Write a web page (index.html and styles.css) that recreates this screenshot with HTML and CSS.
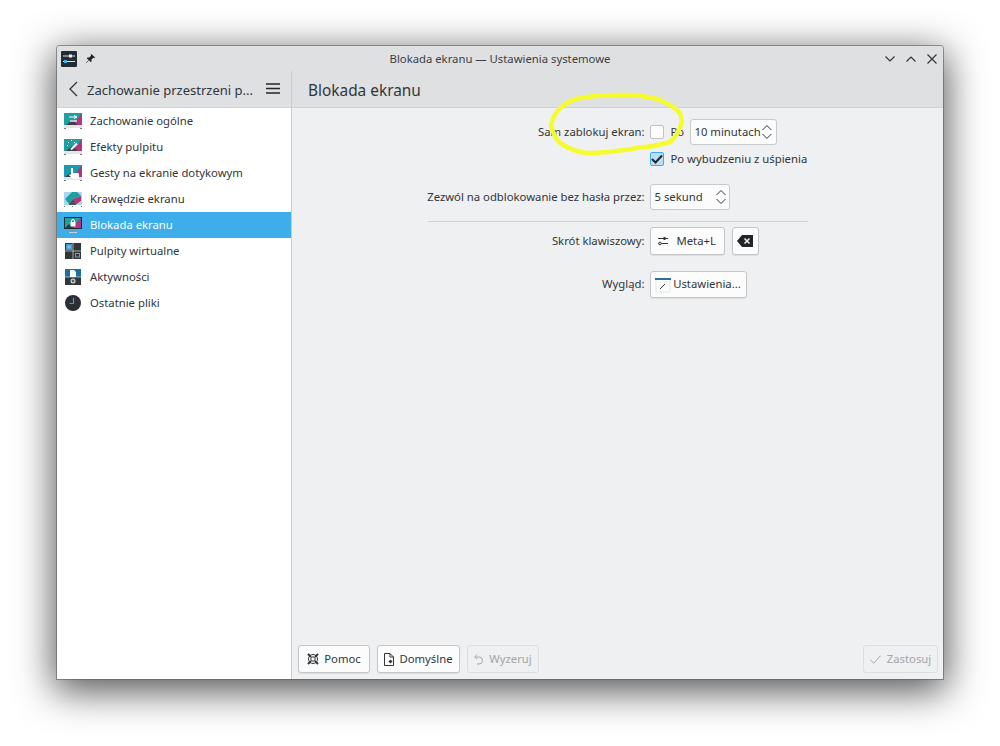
FILE: index.html
```html
<!DOCTYPE html>
<html lang="pl">
<head>
<meta charset="utf-8">
<title>Blokada ekranu — Ustawienia systemowe</title>
<link rel="stylesheet" href="styles.css">
</head>
<body>
<div class="window">
  <header class="titlebar">
    <svg class="app-icon" width="16" height="16" viewBox="0 0 16 16"><rect width="16" height="16" rx="1" fill="#232b33"/><path d="M2 5h12M2 10.500h12" stroke="#dfe5ea" stroke-width="1"/><rect x="8" y="3.500" width="3" height="3" fill="#eef2f5"/><rect x="3" y="9" width="3" height="3" fill="#3daee9"/></svg>
    <svg class="pin" width="11" height="11" viewBox="0 0 12 12"><path d="M7 1l4 4-1 .6-1-.3-2 2 .2 1.800-.9.900-2-2L1.500 11 1 10.500l2.900-2.800-2-2 .9-.9 1.800.2 2-2-.3-1z" fill="#232629"/></svg>
    <div class="title">Blokada ekranu — Ustawienia systemowe</div>
    <div class="controls">
      <svg width="10" height="6" viewBox="0 0 10 6"><path d="M.5 .5l4.500 4.500 4.500-4.500" fill="none" stroke="#31363b" stroke-width="1.200"/></svg>
      <svg width="10" height="6" viewBox="0 0 10 6"><path d="M.5 5.500l4.500-4.500 4.500 4.500" fill="none" stroke="#31363b" stroke-width="1.200"/></svg>
      <svg width="10" height="10" viewBox="0 0 10 10"><path d="M.5 .5l9 9M9.500 .5l-9 9" fill="none" stroke="#31363b" stroke-width="1.200"/></svg>
    </div>
  </header>
  <div class="body">
    <aside class="side">
      <div class="side-head">
        <svg class="back" width="10" height="16" viewBox="0 0 10 16"><path d="M9 1L2 8l7 7" fill="none" stroke="#31363b" stroke-width="1.300"/></svg>
        <span class="side-title">Zachowanie przestrzeni p...</span>
        <svg class="burger" width="14" height="12" viewBox="0 0 14 12"><path d="M0 1h14M0 5.500h14M0 10h14" stroke="#232629" stroke-width="1.500"/></svg>
      </div>
      <nav class="list">
        <a class="item">
          <svg width="18" height="16" viewBox="0 0 18 16"><path d="M0 0h18v12H0z" fill="#1f9f9f"/><path d="M18 0v12H9z" fill="#b0357f"/><path d="M2 12l6-5 6 5z" fill="#3d4449"/><path d="M0 12h18v3H0z" fill="#e3e5e7"/><path d="M0 15h2v1H0zM16 15h2v1h-2z" fill="#70767a"/><path d="M5 4h8M10 2.500L13 4l-3 1.500" fill="none" stroke="#fff"/><path d="M6 8h7" stroke="#e8dfe6" stroke-width="1.500"/></svg>
          <span>Zachowanie ogólne</span>
        </a>
        <a class="item">
          <svg width="18" height="16" viewBox="0 0 18 16"><path d="M0 0h18v12H0z" fill="#1f9f9f"/><path d="M18 0v12H9z" fill="#b0357f"/><path d="M2 12l6-5 6 5z" fill="#3d4449"/><path d="M0 12h18v3H0z" fill="#e3e5e7"/><path d="M0 15h2v1H0zM16 15h2v1h-2z" fill="#70767a"/><path d="M7 10.500l6-6" stroke="#fff" stroke-width="2"/><path d="M4 3h1v1H4zM7 1h1v1H7zM3 6h1v1H3zM10 3h1v1h-1z" fill="#fff"/></svg>
          <span>Efekty pulpitu</span>
        </a>
        <a class="item">
          <svg width="18" height="16" viewBox="0 0 18 16"><path d="M0 0h18v12H0z" fill="#1c9ab0"/><path d="M18 0v12H9z" fill="#b0357f"/><path d="M1 12l5-4 5 4z" fill="#3d4449"/><path d="M0 12h18v3H0z" fill="#e3e5e7"/><path d="M0 15h2v1H0zM16 15h2v1h-2z" fill="#70767a"/><path d="M7 3h2v5h5l1 1v5H9L5 10l1-1 1 1z" fill="#fff"/></svg>
          <span>Gesty na ekranie dotykowym</span>
        </a>
        <a class="item">
          <svg width="18" height="16" viewBox="0 0 18 16"><path d="M0 1h18v13H0z" fill="#a8d8ee"/><path d="M1 8l7-7h5l4 4-8 3-4 5z" fill="#1f9f9f"/><path d="M9 8l8-3v5l-6 4z" fill="#b0357f"/><path d="M5 13l4-5 3 6H5z" fill="#4a5156"/><path d="M0 15h1v1H0zM8 15h1v1H8zM17 15h1v1h-1z" fill="#70767a"/></svg>
          <span>Krawędzie ekranu</span>
        </a>
        <a class="item active">
          <svg width="18" height="16" viewBox="0 0 18 16"><path d="M0 0h18v12H0z" fill="#232b33"/><path d="M1 1h16v10H1z" fill="#1f9f9f"/><path d="M17 1v10H7z" fill="#b0357f"/><path d="M1 11l4-4 5 4z" fill="#31363b"/><path d="M5 15h8v1H5z" fill="#c8ced2"/><path d="M8 12h2v3H8z" fill="#8a9297"/><rect x="6.500" y="5" width="5" height="4.500" fill="#fff"/><path d="M7.500 5V4a1.500 1.500 0 0 1 3 0v1" fill="none" stroke="#fff"/></svg>
          <span>Blokada ekranu</span>
        </a>
        <a class="item">
          <svg width="18" height="16" viewBox="0 0 18 16"><path d="M1 0h16v16H1z" fill="#31363b"/><path d="M9 0v16M1 8h16" stroke="#eff0f1" stroke-width=".6"/><path d="M2 1h6v6H2z" fill="#3a9bd9"/><path d="M3.500 2.500h3v3h-3z" fill="#86bfe3"/><rect x="11.500" y="10.500" width="4" height="3.500" fill="none" stroke="#8e979c"/></svg>
          <span>Pulpity wirtualne</span>
        </a>
        <a class="item">
          <svg width="18" height="16" viewBox="0 0 18 16"><path d="M1 0h16v16H1z" fill="#31363b"/><path d="M1 0h16v8H1z" fill="#1d6f9f"/><path d="M6 1h4l2 2v5H6z" fill="#fff"/><path d="M1 8h16" stroke="#eff0f1" stroke-width=".6"/><circle cx="9" cy="12" r="2.500" fill="#dfe3e6"/><path d="M9 10.500v3M7.500 12h3" stroke="#31363b"/></svg>
          <span>Aktywności</span>
        </a>
        <a class="item">
          <svg width="18" height="16" viewBox="0 0 18 16"><circle cx="9" cy="8" r="8" fill="#2b2f33"/><path d="M9.500 3v5.500H5.500" fill="none" stroke="#2f9fe8" stroke-width="1.200"/></svg>
          <span>Ostatnie pliki</span>
        </a>
      </nav>
    </aside>
    <main class="main">
      <div class="main-head">Blokada ekranu</div>
      <div class="content">
        <form class="form">
          <label class="lbl r1">Sam zablokuj ekran:</label>
          <div class="field r1 inline">
            <span class="check"></span>
            <span class="after-check">Po</span>
            <span class="spin spin-min"><span>10 minutach</span><svg width="12" height="20" viewBox="0 0 12 20"><path d="M1.500 8l4.500-4.500 4.500 4.500M1.500 12l4.500 4.500 4.500-4.500" fill="none" stroke="#31363b"/></svg></span>
          </div>
          <div class="field r2 inline">
            <span class="check checked"><svg width="12" height="10" viewBox="0 0 12 10"><path d="M1 5l3.500 3.500L11 1.500" fill="none" stroke="#232629" stroke-width="2"/></svg></span>
            <span class="after-check">Po wybudzeniu z uśpienia</span>
          </div>
          <label class="lbl r3">Zezwól na odblokowanie bez hasła przez:</label>
          <div class="field r3">
            <span class="spin spin-sec"><span>5 sekund</span><svg width="12" height="20" viewBox="0 0 12 20"><path d="M1.500 8l4.500-4.500 4.500 4.500M1.500 12l4.500 4.500 4.500-4.500" fill="none" stroke="#31363b"/></svg></span>
          </div>
          <hr class="rule">
          <label class="lbl r5">Skrót klawiszowy:</label>
          <div class="field r5 inline-btn">
            <button type="button" class="btn key"><svg width="12" height="12" viewBox="0 0 12 12"><path d="M1 3.500h10M1 8.500h10" stroke="#31363b"/><rect x="6.500" y="2" width="2" height="3" fill="#31363b"/><circle cx="3" cy="8.500" r="1.300" fill="#eff0f1" stroke="#31363b"/></svg><span>Meta+L</span></button>
            <button type="button" class="btn clear"><svg width="16" height="12" viewBox="0 0 16 12"><path d="M5 0h11v12H5L0 6z" fill="#232629"/><path d="M7.500 3.500l5 5M12.500 3.500l-5 5" stroke="#eff0f1" stroke-width="1.500"/></svg></button>
          </div>
          <label class="lbl r6">Wygląd:</label>
          <div class="field r6">
            <button type="button" class="btn look"><svg width="16" height="16" viewBox="0 0 16 16"><path d="M1 2h14v13H1z" fill="#fcfcfc" stroke="#d5d8da" stroke-width=".6"/><path d="M0 1h16v2H0z" fill="#2b6f97"/><path d="M5 12l5-5" stroke="#31363b"/></svg><span>Ustawienia...</span></button>
          </div>
        </form>
        <footer class="footer">
          <button type="button" class="btn b-help"><svg width="12" height="12" viewBox="0 0 12 12"><circle cx="6" cy="6" r="4.500" fill="none" stroke="#31363b"/><circle cx="6" cy="6" r="2.200" fill="none" stroke="#31363b"/><path d="M1 1l3 3M11 1L8 4M1 11l3-3M11 11L8 8" stroke="#31363b" stroke-width="2"/></svg><span>Pomoc</span></button>
          <button type="button" class="btn b-def"><svg width="10" height="13" viewBox="0 0 10 13"><path d="M.5 .5h5.500l3.500 3.500v8.500h-9z" fill="none" stroke="#31363b"/><path d="M6 .5V4h3.500" fill="none" stroke="#31363b"/><path d="M4.500 8.500l2-2 2 2-2 2z" fill="#31363b"/></svg><span>Domyślne</span></button>
          <button type="button" class="btn off b-reset"><svg width="9" height="11" viewBox="0 0 9 11"><path d="M3 .5L.8 3 3 5.500M1 3h4a3.500 3.500 0 0 1 0 7H3" fill="none" stroke="#a3a5a7"/></svg><span>Wyzeruj</span></button>
          <button type="button" class="btn off apply"><svg width="11" height="9" viewBox="0 0 11 9"><path d="M.5 5L3.800 8.200 10.500 .8" fill="none" stroke="#a3a5a7"/></svg><span>Zastosuj</span></button>
        </footer>
      </div>
    </main>
  </div>
  <svg class="marker" width="136" height="64" viewBox="0 0 136 64"><path d="M3 33C5 24 10 17 16 13 22 8 30 6 39 5 54 2 70 3 85 3 95 4 104 5 112 8 121 12 128 16 132 21 134 26 134 29 133 33 130 41 127 46 122 50 112 53 100 55 89 56 72 59 55 61 39 61 29 60 20 56 12 51 8 47 5 42 3 33z" fill="none" stroke="#f6fb2e" stroke-width="4.500" stroke-linejoin="round"/></svg>
</div>
</body>
</html>
```

FILE: styles.css
```css
* { box-sizing: border-box; }
html, body { margin: 0; height: 100%; }
body {
  background: #fff;
  padding: 46px 57px 67px;
  font-family: "Noto Sans", sans-serif;
  font-size: 11.3px;
  color: #31363b;
  overflow: hidden;
}
.window {
  position: relative;
  height: 633px;
  display: flex;
  flex-direction: column;
  border-radius: 3px 3px 0 0;
  background: #eff0f1;
  box-shadow: 0 0 0 1px rgba(90, 92, 95, .6), 0 9px 38px 3px rgba(0, 0, 0, .68);
}
.titlebar {
  height: 25px;
  flex: none;
  display: flex;
  align-items: center;
  background: #dee0e2;
  padding: 0 6px 0 4px;
  position: relative;
  border-radius: 3px 3px 0 0;
}
.app-icon { margin-right: 8px; }
.title {
  position: absolute;
  left: 0;
  right: 0;
  text-align: center;
  color: #3c4146;
  padding-bottom: 1px;
}
.controls {
  margin-left: auto;
  display: flex;
  align-items: center;
  gap: 11px;
  position: relative;
}
.body { flex: 1; display: flex; min-height: 0; }
.side {
  width: 235px;
  flex: none;
  display: flex;
  flex-direction: column;
  border-right: 1px solid #c9cbcd;
  background: #fff;
}
.side-head {
  height: 37px;
  flex: none;
  display: flex;
  align-items: center;
  background: #dee0e2;
  border-bottom: 1px solid #cfd1d3;
  padding: 0 11px 0 11px;
}
.side-title { margin-left: 9px; font-size: 13px; white-space: nowrap; padding-top: 1px; }
.burger { margin-left: auto; }
.list { display: flex; flex-direction: column; }
.item {
  height: 26px;
  display: flex;
  align-items: center;
  padding-left: 7px;
  gap: 8px;
}
.item span { padding-bottom: 2px; }
.item svg { flex: none; }
.item.active { background: #3daee9; color: #fcfcfc; }
.main { flex: 1; display: flex; flex-direction: column; min-width: 0; }
.main-head {
  height: 37px;
  flex: none;
  display: flex;
  align-items: center;
  background: #dee0e2;
  border-bottom: 1px solid #cfd1d3;
  padding: 2px 0 0 16px;
  font-size: 15.4px;
}
.content { flex: 1; display: flex; flex-direction: column; min-height: 0; }
.form {
  width: 380px;
  margin: 11px auto 0;
  display: grid;
  grid-template-columns: 217px 158px;
  column-gap: 5px;
  align-items: center;
}
.lbl { grid-column: 1; text-align: right; white-space: nowrap; justify-self: end; padding-bottom: 2px; }
.field { grid-column: 2; white-space: nowrap; }
.r1 { grid-row: 1; }
.r2 { grid-row: 2; height: 28px; }
.r3 { grid-row: 3; margin-top: 11px; }
.rule {
  grid-row: 4;
  grid-column: 1 / 3;
  width: 100%;
  height: 1px;
  margin: 11px 0 5px;
  border: 0;
  background: #cfd1d3;
}
.r5 { grid-row: 5; }
.r6 { grid-row: 6; margin-top: 16px; }
.inline, .inline-btn { display: flex; align-items: center; }
.field.r3, .field.r6 { display: flex; }
.check {
  width: 14px;
  height: 14px;
  flex: none;
  display: flex;
  align-items: center;
  justify-content: center;
  background: #fcfcfc;
  border: 1px solid #bfc2c4;
  border-radius: 2px;
}
.check.checked { background: #b8dff5; border-color: #3daee9; }
.after-check { margin-left: 7px; padding-bottom: 1px; }
.spin {
  height: 26px;
  display: flex;
  align-items: center;
  justify-content: space-between;
  background: #fcfcfc;
  border: 1px solid #c8cacc;
  border-radius: 3px;
  padding: 0 3px 0 4px;
  line-height: 1;
  white-space: nowrap;
}
.spin-min { width: 87px; margin-left: auto; margin-right: 31px; }
.spin-sec { width: 80px; padding-right: 2px; }
.spin span { padding-bottom: 1px; }
.btn {
  height: 28px;
  display: inline-flex;
  align-items: center;
  justify-content: center;
  gap: 5px;
  background: #fcfcfc;
  border: 1px solid #c4c6c8;
  border-radius: 3px;
  box-shadow: 0 1px 1px rgba(0, 0, 0, .08);
  padding: 0;
  font: inherit;
  color: #31363b;
  white-space: nowrap;
}
.btn span { padding-bottom: 2px; }
.key { width: 75px; justify-content: flex-start; padding-left: 6px; gap: 8px; }
.clear { width: 27px; margin-left: 7px; }
.look { width: 97px; height: 27px; gap: 2px; }
.footer {
  margin-top: auto;
  display: flex;
  gap: 7px;
  padding: 0 5px 6px 6px;
}
.b-help { width: 72px; }
.b-def { width: 83px; }
.b-reset { width: 72px; gap: 6px; }
.off {
  background: #eff0f1;
  border-color: #dcdee0;
  color: #a3a5a7;
  box-shadow: none;
}
.apply { margin-left: auto; width: 75px; gap: 6px; }
.marker {
  position: absolute;
  left: 491px;
  top: 46px;
  pointer-events: none;
}
```
